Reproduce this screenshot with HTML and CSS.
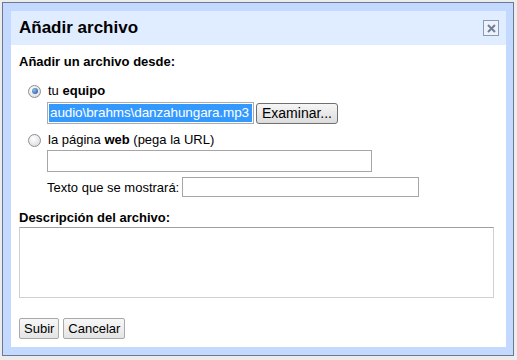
FILE: index.html
```html
<!DOCTYPE html>
<html lang="es">

<head>
    <meta charset="UTF-8">
    <meta name="viewport" content="width=device-width, initial-scale=1.0">
    <title>Añadir archivo</title>
    <link rel="stylesheet" href="styles.css">
</head>

<body>
    <div class="dialog">
        <div class="title-bar">
            <h1 class="title">Añadir archivo</h1>
            <span class="close">
                <svg width="11" height="11" viewBox="0 0 11 11">
                    <path d="M2 2 L9 9 M9 2 L2 9" stroke="#6f7f96" stroke-width="2" />
                </svg>
            </span>
        </div>
        <div class="content">
            <div class="heading">Añadir un archivo desde:</div>

            <label class="option">
                <span class="radio checked"></span>
                <span>tu <b>equipo</b></span>
            </label>
            <div class="file-row">
                <div class="file-box"><span class="selected">audio\brahms\danzahungara.mp3</span></div>
                <span class="browse">Examinar...</span>
            </div>

            <label class="option second">
                <span class="radio"></span>
                <span>la página <b>web</b> (pega la URL)</span>
            </label>
            <div class="indent">
                <div class="field url"></div>
                <div class="text-row">
                    <span>Texto que se mostrará:</span>
                    <div class="field shown"></div>
                </div>
            </div>

            <div class="heading desc">Descripción del archivo:</div>
            <div class="textarea"></div>

            <div class="actions">
                <span class="btn">Subir</span>
                <span class="btn">Cancelar</span>
            </div>
        </div>
    </div>
</body>

</html>
```

FILE: styles.css
```css
* {
    margin: 0;
    padding: 0;
    box-sizing: border-box;
}

body {
    background: #ececec;
    padding: 2px;
    font-family: "Liberation Sans", Arial, sans-serif;
    font-size: 13px;
    color: #000;
}

.dialog {
    width: 512px;
    height: 354px;
    border: 1px solid #6b7a91;
    background: #c3d9ff;
    padding: 8px 7px 8px 8px;
    display: flex;
    flex-direction: column;
}

.title-bar {
    height: 34px;
    background: #e0ecff;
    display: flex;
    align-items: center;
    justify-content: space-between;
    padding: 0 7px 0 8px;
}

.title {
    font-size: 17px;
    font-weight: bold;
}

.close {
    width: 16px;
    height: 16px;
    border: 1px solid #8a9ab3;
    background: #eef3fb;
    display: flex;
    align-items: center;
    justify-content: center;
}

.content {
    flex: 1;
    background: #fff;
    padding: 9px 8px 0 8px;
}

.heading {
    font-weight: bold;
    line-height: 16px;
}

.option {
    display: flex;
    align-items: center;
    gap: 7px;
    margin: 13px 0 0 9px;
    line-height: 16px;
}

.option.second {
    margin-top: 8px;
}

.radio {
    width: 13px;
    height: 13px;
    border-radius: 50%;
    border: 1px solid #8a9099;
    background: radial-gradient(circle at 40% 35%, #fff 0%, #e2e2e2 70%, #c8c8c8 100%);
    display: flex;
    align-items: center;
    justify-content: center;
}

.radio.checked::after {
    content: "";
    width: 6px;
    height: 6px;
    border-radius: 50%;
    background: radial-gradient(circle at 35% 35%, #8fbcec, #16509a);
}

.file-row {
    display: flex;
    align-items: center;
    gap: 2px;
    margin: 3px 0 0 28px;
}

.file-box {
    width: 207px;
    height: 22px;
    border: 1px solid #a5acb2;
    padding: 1px 1px;
    overflow: hidden;
    white-space: nowrap;
    font-size: 13.5px;
    line-height: 18px;
}

.selected {
    background: #3399ff;
    color: #fff;
    display: inline-block;
    width: 203px;
    padding-left: 1px;
    letter-spacing: -0.1px;
}

.browse {
    width: 82px;
    height: 21px;
    border: 1px solid #707070;
    border-radius: 3px;
    background: linear-gradient(#f6f6f6, #dcdcdc);
    font-size: 14px;
    line-height: 19px;
    text-align: center;
}

.indent {
    margin-left: 28px;
}

.field {
    height: 22px;
    border: 1px solid #a6a6a6;
    background: #fff;
}

.url {
    width: 325px;
    margin-top: 2px;
}

.text-row {
    display: flex;
    align-items: center;
    gap: 3px;
    margin-top: 5px;
}

.shown {
    width: 237px;
    height: 20px;
}

.heading.desc {
    margin-top: 13px;
}

.textarea {
    width: 475px;
    height: 71px;
    border: 1px solid #d0d0d0;
    border-top-color: #a0a0a0;
    margin-top: 1px;
}

.actions {
    display: flex;
    gap: 4px;
    margin-top: 20px;
}

.btn {
    height: 21px;
    border: 1px solid #a9a9a9;
    border-radius: 2px;
    background: linear-gradient(#f7f7f7, #e4e4e4);
    padding: 0 4px;
    line-height: 19px;
}
```
